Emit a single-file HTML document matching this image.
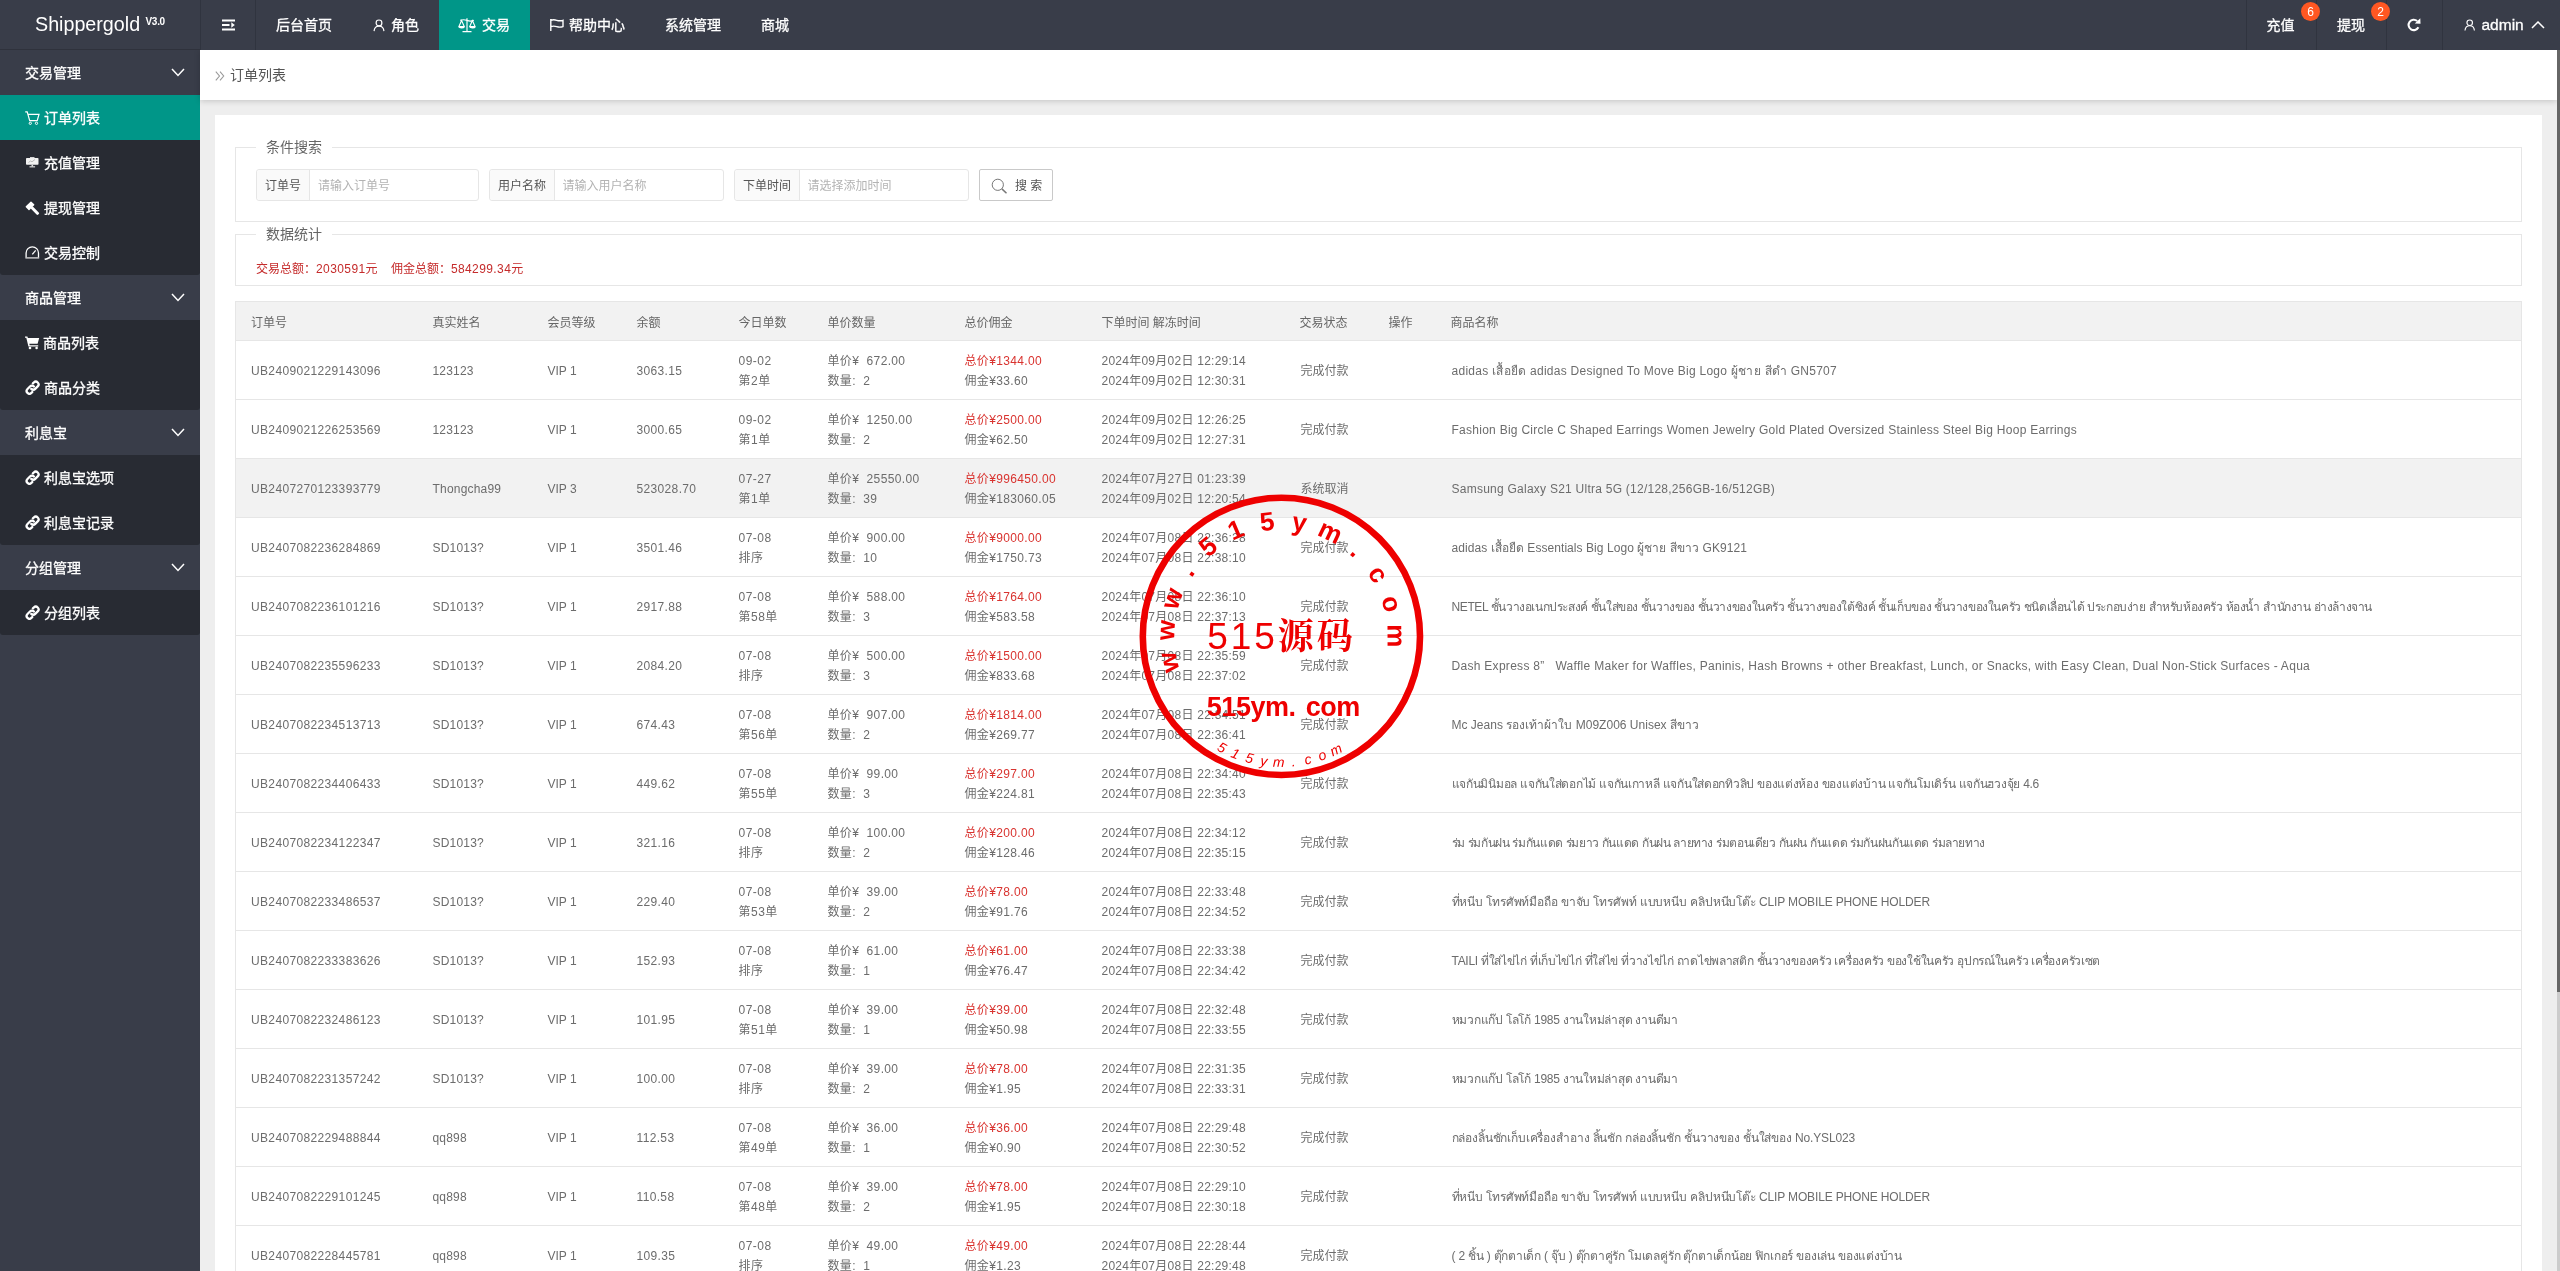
<!DOCTYPE html>
<html lang="zh-CN">
<head>
<meta charset="utf-8">
<title>订单列表</title>
<style>
*{box-sizing:border-box;margin:0;padding:0}
html,body{width:2560px;height:1271px;overflow:hidden;background:#eee}
body{font-family:"Liberation Sans","Noto Sans CJK SC",sans-serif;font-size:12px;color:#666;position:relative}
.abs{position:absolute}
/* header */
#hd{position:absolute;left:0;top:0;width:2560px;height:50px;background:#393d49;z-index:5}
#logo{position:absolute;left:0;top:0;width:200px;height:50px;color:#fff;font-size:19.7px;line-height:50px;border-bottom:1px solid #2f323c}
#logo .t{position:absolute;left:35px;top:-1px;letter-spacing:0}
#logo sup{position:absolute;left:145.500px;top:-3.500px;font-size:10px;font-weight:bold;letter-spacing:-.3px}
.nv{position:absolute;top:0;height:50px;line-height:50px;color:#fff;font-size:14px;white-space:nowrap}
.nv.act{background:#009688}
.vline{position:absolute;top:0;width:1px;height:50px;background:#30343f}
.nv svg{position:absolute}
.badge{position:absolute;z-index:3;width:19px;height:19px;border-radius:10px;background:#ff5722;color:#fff;font-size:12px;line-height:20.500px;text-align:center}
/* sidebar */
#sd{position:absolute;left:0;top:50px;width:200px;height:1221px;background:#393d49}
.mh{position:absolute;left:0;width:200px;height:45px;line-height:46.500px;color:#fff;font-size:14px;padding-left:25px}
.mh svg{position:absolute;left:171px;top:18px}
.sub{position:absolute;left:0;width:200px;background:#282b33;border-radius:0 0 3px 3px}
.mi{position:relative;height:45px;line-height:46.500px;color:#fff;font-size:14px;padding-left:44px;white-space:nowrap}
.mi.act{background:#009688}
.mi svg{position:absolute;left:25px;top:15px}
/* main */
#tb{position:absolute;left:200px;top:50px;width:2357px;height:50px;background:#fff;box-shadow:0 1px 6px rgba(0,0,0,.18);z-index:2}
#tb .t{position:absolute;left:30px;top:0;line-height:51px;font-size:14px;color:#555}
#card{position:absolute;left:215px;top:115px;width:2327px;height:1200px;background:#fff}
.fs{position:absolute;left:20px;width:2287px;border:1px solid #e6e6e6}
.lg{position:absolute;left:20px;top:-11px;height:20px;line-height:20px;padding:0 10px;background:#fff;font-size:14px;color:#666}
.ig{position:absolute;top:21px;height:32px;border:1px solid #e6e6e6;border-radius:3px;background:#fff}
.ig .lb{position:absolute;left:0;top:0;height:30px;line-height:32.500px;background:#fafafa;border-right:1px solid #e6e6e6;color:#555;text-align:center;border-radius:3px 0 0 3px}
.ig .ph{position:absolute;top:0;line-height:32.500px;color:#b3b3b3}
.btn{position:absolute;top:21px;left:743px;width:74px;height:32px;border:1px solid #c9c9c9;border-radius:2px;background:#fff;color:#555;line-height:32.500px}
.red{color:#d9332f}
/* table */
table{position:absolute;left:20px;top:186px;width:2287px;border-collapse:collapse;table-layout:fixed;border:1px solid #e6e6e6}
th{height:39px;background:#f2f2f2;text-align:left;font-weight:normal;color:#666;padding:0 15px;border-bottom:1px solid #e6e6e6;font-size:12px}
td{height:59px;padding:2px 15px 0;border-bottom:1px solid #e6e6e6;line-height:20px;white-space:nowrap;color:#6c6c6c;font-size:12px;overflow:hidden}
tr.hov td{background:#f2f2f2}
.c1,.c4,.c6,.c7{letter-spacing:.35px}.c2{letter-spacing:.2px}.c5{letter-spacing:.5px}.c8{letter-spacing:.25px}
#card,#hd,#sd,#tb{will-change:transform}
.mh,.mi,.nv{-webkit-text-stroke:.3px #fff}
td.c9,td.c11{padding-left:16px}
/* scrollbar */
#sbt{position:absolute;left:2557px;top:50px;width:3px;height:1221px;background:#ccc;z-index:6}
#sbh{position:absolute;left:2557px;top:50px;width:3px;height:942px;background:#666;z-index:7}
#stamp{position:absolute;left:1130.700px;top:485.700px;z-index:9}
</style>
</head>
<body>
<div id="hd">
  <div id="logo"><span class="t">Shippergold</span><sup>V3.0</sup></div>
  <div class="vline" style="left:200px"></div>
  <div class="nv" style="left:201px;width:54px">
    <svg style="left:21px;top:19px" width="13" height="12" viewBox="0 0 13 12"><path d="M0 1.500h13M0 6h7.500M0 10.500h13" stroke="#fff" stroke-width="2" fill="none"/><path d="M9.300 3.300l3.500 2.700-3.500 2.700z" fill="#fff"/></svg>
  </div>
  <div class="vline" style="left:255px"></div>
  <div class="nv" style="left:276px">后台首页</div>
  <div class="nv" style="left:352px;width:87px"><svg style="left:20.900px;top:19px" width="12" height="12.800" viewBox="0 0 14 15"><circle cx="7" cy="4.6" r="3.4" fill="none" stroke="#fff" stroke-width="1.4"/><path d="M1.2 14.2c.3-3.6 2.6-5.9 5.8-5.9s5.5 2.3 5.8 5.9" fill="none" stroke="#fff" stroke-width="1.4"/></svg><span style="position:absolute;left:39px">角色</span></div>
  <div class="nv act" style="left:439px;width:91px"><svg style="left:19px;top:17px" width="18" height="16" viewBox="0 0 18 16"><g fill="none" stroke="#fff" stroke-width="1.150"><path d="M9 1.2v13M4.5 14.6h9M2.2 3.4c2.2-.9 4.5-.9 6.8 0 2.300.9 4.600.9 6.800 0"/><path d="M3.600 3.600L.9 9.600h5.400zM.8 9.700c.5 1.600 4.900 1.600 5.500 0M14.400 3.600l-2.700 6h5.400zM11.700 9.700c.5 1.600 4.900 1.600 5.500 0"/></g></svg><span style="position:absolute;left:43px">交易</span></div>
  <div class="nv" style="left:530px;width:115px"><svg style="left:20px;top:19.200px" width="14" height="12" viewBox="0 0 14 12"><path d="M.8 0v12M.8 1.300c1.900-.7 3.800-.7 5.900 0 2.100.7 4.100.7 6.300 0v6.300c-2.200.7-4.200.7-6.300 0-2.100-.7-4-.7-5.900 0" fill="none" stroke="#fff" stroke-width="1.400"/></svg><span style="position:absolute;left:39px">帮助中心</span></div>
  <div class="nv" style="left:665px">系统管理</div>
  <div class="nv" style="left:761px">商城</div>

  <div class="vline" style="left:2246px"></div>
  <div class="nv" style="left:2266.500px">充值</div>
  <div class="badge" style="left:2301px;top:1.500px">6</div>
  <div class="vline" style="left:2316px"></div>
  <div class="nv" style="left:2337px">提现</div>
  <div class="badge" style="left:2371px;top:1.500px">2</div>
  <div class="vline" style="left:2386px"></div>
  <div class="nv" style="left:2387px;width:55px"><svg style="left:20px;top:18.300px" width="14" height="14" viewBox="0 0 14 14"><path d="M11.400 9.300A5.200 5.200 0 1 1 10.200 3" fill="none" stroke="#fff" stroke-width="2.100"/><path d="M7.800 5.500L13.500 5.800 13.300 .2z" fill="#fff"/></svg></div>
  <div class="vline" style="left:2442px"></div>
  <div class="nv" style="left:2443px;width:114px"><svg style="left:21px;top:18.700px" width="11.400" height="12.200" viewBox="0 0 14 15"><circle cx="7" cy="4.6" r="3.4" fill="none" stroke="#fff" stroke-width="1.400"/><path d="M1.200 14.200c.3-3.600 2.600-5.900 5.800-5.900s5.500 2.300 5.800 5.900" fill="none" stroke="#fff" stroke-width="1.400"/></svg><span style="position:absolute;left:38.500px;font-size:15.500px">admin</span><svg style="left:88px;top:21px" width="14" height="8" viewBox="0 0 14 8"><path d="M1 7l6-6 6 6" fill="none" stroke="#fff" stroke-width="1.500"/></svg></div>
</div>

<div id="sd">
  <div class="mh" style="top:0">交易管理<svg width="14" height="9" viewBox="0 0 14 9"><path d="M1 1l6 6.500L13 1" fill="none" stroke="#fff" stroke-width="1.500"/></svg></div>
  <div class="sub" style="top:45px;height:180px">
    <div class="mi act"><svg width="15" height="15" viewBox="0 0 15 15"><path d="M.2 1.900h2l2.500 8.700h7.500l1.800-6.300H3.300" fill="none" stroke="#fff" stroke-width="1.200"/><circle cx="5.300" cy="13.300" r="1.150" fill="none" stroke="#fff" stroke-width="1"/><circle cx="11.500" cy="13.300" r="1.150" fill="none" stroke="#fff" stroke-width="1"/></svg>订单列表</div>
    <div class="mi"><svg width="15" height="15" viewBox="0 0 15 15"><rect x="1" y="3" width="12.500" height="6.800" rx=".8" fill="#f2f2f2"/><path d="M3.500 7.500l2-1.500 1.500.8 3-2.300" stroke="#aaa" stroke-width=".8" fill="none"/><rect x="5" y="2.100" width="4.500" height="1.200" fill="#e8e8e8"/><rect x="6.500" y="9.800" width="1.600" height="1.700" fill="#ddd"/><rect x="4.500" y="11.300" width="5.600" height="1.100" fill="#e8e8e8"/></svg>充值管理</div>
    <div class="mi"><svg width="15" height="15" viewBox="0 0 15 15"><g fill="#fff" transform="translate(5 5.800) rotate(45)"><rect x="-2.600" y="-4" width="5.200" height="8" rx=".7"/><rect x="2" y="-1.500" width="10" height="3" rx="1.200"/></g></svg>提现管理</div>
    <div class="mi"><svg width="15" height="15" viewBox="0 0 15 15"><path d="M1.100 12.500V8a6.200 6.200 0 0 1 12.400 0v4.500" fill="none" stroke="#fff" stroke-width="1.300"/><path d="M7.300 9.300l3.400-4" stroke="#fff" stroke-width="1.300"/><path d="M.4 12.900h13.800" stroke="#ddd" stroke-width="1.300"/></svg>交易控制</div>
  </div>
  <div class="mh" style="top:225px">商品管理<svg width="14" height="9" viewBox="0 0 14 9"><path d="M1 1l6 6.500L13 1" fill="none" stroke="#fff" stroke-width="1.500"/></svg></div>
  <div class="sub" style="top:270px;height:90px">
    <div class="mi" style="padding-left:43px"><svg width="15" height="15" viewBox="0 0 15 15"><path d="M0 1.500h2.400l.5 1.500h11.300l-1.600 5.800H4.300l.4 1.500h8.500v1.200H3.400L1.300 2.700H0z" fill="#fff"/><circle cx="5" cy="13" r="1.300" fill="#fff"/><circle cx="11.600" cy="13" r="1.300" fill="#fff"/></svg>商品列表</div>
    <div class="mi"><svg width="15" height="15" viewBox="0 0 15 15"><g fill="none" stroke="#fff" stroke-width="2.300" stroke-linecap="round"><path d="M6.300 8.900a2.700 2.700 0 0 0 3.900 0l2.500-2.500a2.700 2.700 0 0 0-3.900-3.900L7.900 3.400"/><path d="M8.900 6.500a2.700 2.700 0 0 0-3.900 0L2.500 9a2.700 2.700 0 0 0 3.900 3.900l.9-.9"/></g></svg>商品分类</div>
  </div>
  <div class="mh" style="top:360px">利息宝<svg width="14" height="9" viewBox="0 0 14 9"><path d="M1 1l6 6.500L13 1" fill="none" stroke="#fff" stroke-width="1.500"/></svg></div>
  <div class="sub" style="top:405px;height:90px">
    <div class="mi"><svg width="15" height="15" viewBox="0 0 15 15"><g fill="none" stroke="#fff" stroke-width="2.300" stroke-linecap="round"><path d="M6.300 8.900a2.700 2.700 0 0 0 3.900 0l2.500-2.500a2.700 2.700 0 0 0-3.900-3.900L7.900 3.400"/><path d="M8.900 6.500a2.700 2.700 0 0 0-3.900 0L2.500 9a2.700 2.700 0 0 0 3.900 3.900l.9-.9"/></g></svg>利息宝选项</div>
    <div class="mi"><svg width="15" height="15" viewBox="0 0 15 15"><g fill="none" stroke="#fff" stroke-width="2.300" stroke-linecap="round"><path d="M6.300 8.900a2.700 2.700 0 0 0 3.900 0l2.500-2.500a2.700 2.700 0 0 0-3.900-3.900L7.900 3.400"/><path d="M8.900 6.500a2.700 2.700 0 0 0-3.900 0L2.500 9a2.700 2.700 0 0 0 3.900 3.900l.9-.9"/></g></svg>利息宝记录</div>
  </div>
  <div class="mh" style="top:495px">分组管理<svg width="14" height="9" viewBox="0 0 14 9"><path d="M1 1l6 6.500L13 1" fill="none" stroke="#fff" stroke-width="1.500"/></svg></div>
  <div class="sub" style="top:540px;height:45px">
    <div class="mi"><svg width="15" height="15" viewBox="0 0 15 15"><g fill="none" stroke="#fff" stroke-width="2.300" stroke-linecap="round"><path d="M6.300 8.900a2.700 2.700 0 0 0 3.900 0l2.500-2.500a2.700 2.700 0 0 0-3.900-3.900L7.900 3.400"/><path d="M8.900 6.500a2.700 2.700 0 0 0-3.900 0L2.500 9a2.700 2.700 0 0 0 3.900 3.900l.9-.9"/></g></svg>分组列表</div>
  </div>
</div>

<div id="tb"><svg class="abs" style="left:15px;top:20.500px" width="10" height="10" viewBox="0 0 10 10"><path d="M.8.600L4.500 5 .8 9.400M5 .6L8.700 5 5 9.400" fill="none" stroke="#999" stroke-width="1.100"/></svg><span class="t">订单列表</span></div>

<div id="card">
  <div class="fs" style="top:32px;height:75px">
    <div class="lg">条件搜索</div>
    <div class="ig" style="left:20px;width:223px"><div class="lb" style="width:53px">订单号</div><div class="ph" style="left:61px">请输入订单号</div></div>
    <div class="ig" style="left:253px;width:235px"><div class="lb" style="width:65px">用户名称</div><div class="ph" style="left:72.500px">请输入用户名称</div></div>
    <div class="ig" style="left:498px;width:235px"><div class="lb" style="width:65px">下单时间</div><div class="ph" style="left:72.500px">请选择添加时间</div></div>
    <div class="btn"><svg class="abs" style="left:11px;top:7.500px" width="17" height="17" viewBox="0 0 17 17"><circle cx="6.800" cy="6.800" r="5.600" fill="none" stroke="#777" stroke-width="1"/><path d="M10.900 10.900l4.600 4.400" stroke="#777" stroke-width="1.500"/></svg><span class="abs" style="left:35px;top:0">搜 索</span></div>
  </div>
  <div class="fs" style="top:119px;height:52px">
    <div class="lg">数据统计</div>
    <div class="abs" style="left:20px;top:24px;line-height:20px;color:#c52b2b;white-space:nowrap">交易总额：<span style="letter-spacing:.4px">2030591</span>元 &nbsp;&nbsp; 佣金总额：<span style="letter-spacing:.4px">584299.34</span>元</div>
  </div>
  <table>
    <colgroup><col style="width:182px"><col style="width:115px"><col style="width:89px"><col style="width:102px"><col style="width:89px"><col style="width:137px"><col style="width:137px"><col style="width:198px"><col style="width:89px"><col style="width:62px"><col></colgroup>
    <thead><tr><th>订单号</th><th>真实姓名</th><th>会员等级</th><th>余额</th><th>今日单数</th><th>单价数量</th><th>总价佣金</th><th>下单时间 解冻时间</th><th>交易状态</th><th>操作</th><th>商品名称</th></tr></thead>
    <tbody>
<tr><td class="c1">UB2409021229143096</td><td class="c2">123123</td><td class="c3">VIP 1</td><td class="c4">3063.15</td><td class="c5">09-02<br>第2单</td><td class="c6">单价¥&nbsp; 672.00<br>数量: &nbsp;2</td><td class="c7"><span class="red">总价¥1344.00</span><br>佣金¥33.60</td><td class="c8">2024年09月02日 12:29:14<br>2024年09月02日 12:30:31</td><td class="c9">完成付款</td><td class="c10"></td><td class="c11" style="letter-spacing:0.27px">adidas เสื้อยืด adidas Designed To Move Big Logo ผู้ชาย สีดำ GN5707</td></tr>
<tr><td class="c1">UB2409021226253569</td><td class="c2">123123</td><td class="c3">VIP 1</td><td class="c4">3000.65</td><td class="c5">09-02<br>第1单</td><td class="c6">单价¥&nbsp; 1250.00<br>数量: &nbsp;2</td><td class="c7"><span class="red">总价¥2500.00</span><br>佣金¥62.50</td><td class="c8">2024年09月02日 12:26:25<br>2024年09月02日 12:27:31</td><td class="c9">完成付款</td><td class="c10"></td><td class="c11" style="letter-spacing:0.265px">Fashion Big Circle C Shaped Earrings Women Jewelry Gold Plated Oversized Stainless Steel Big Hoop Earrings</td></tr>
<tr class="hov"><td class="c1">UB2407270123393779</td><td class="c2">Thongcha99</td><td class="c3">VIP 3</td><td class="c4">523028.70</td><td class="c5">07-27<br>第1单</td><td class="c6">单价¥&nbsp; 25550.00<br>数量: &nbsp;39</td><td class="c7"><span class="red">总价¥996450.00</span><br>佣金¥183060.05</td><td class="c8">2024年07月27日 01:23:39<br>2024年09月02日 12:20:54</td><td class="c9">系统取消</td><td class="c10"></td><td class="c11" style="letter-spacing:0.248px">Samsung Galaxy S21 Ultra 5G (12/128,256GB-16/512GB)</td></tr>
<tr><td class="c1">UB2407082236284869</td><td class="c2">SD1013?</td><td class="c3">VIP 1</td><td class="c4">3501.46</td><td class="c5">07-08<br>排序</td><td class="c6">单价¥&nbsp; 900.00<br>数量: &nbsp;10</td><td class="c7"><span class="red">总价¥9000.00</span><br>佣金¥1750.73</td><td class="c8">2024年07月08日 22:36:28<br>2024年07月08日 22:38:10</td><td class="c9">完成付款</td><td class="c10"></td><td class="c11" style="letter-spacing:0.062px">adidas เสื้อยืด Essentials Big Logo ผู้ชาย สีขาว GK9121</td></tr>
<tr><td class="c1">UB2407082236101216</td><td class="c2">SD1013?</td><td class="c3">VIP 1</td><td class="c4">2917.88</td><td class="c5">07-08<br>第58单</td><td class="c6">单价¥&nbsp; 588.00<br>数量: &nbsp;3</td><td class="c7"><span class="red">总价¥1764.00</span><br>佣金¥583.58</td><td class="c8">2024年07月08日 22:36:10<br>2024年07月08日 22:37:13</td><td class="c9">完成付款</td><td class="c10"></td><td class="c11" style="letter-spacing:-0.395px">NETEL ชั้นวางอเนกประสงค์ ชั้นใส่ของ ชั้นวางของ ชั้นวางของในครัว ชั้นวางของใต้ซิงค์ ชั้นเก็บของ ชั้นวางของในครัว ชนิดเลื่อนได้ ประกอบง่าย สำหรับห้องครัว ห้องน้ำ สำนักงาน อ่างล้างจาน</td></tr>
<tr><td class="c1">UB2407082235596233</td><td class="c2">SD1013?</td><td class="c3">VIP 1</td><td class="c4">2084.20</td><td class="c5">07-08<br>排序</td><td class="c6">单价¥&nbsp; 500.00<br>数量: &nbsp;3</td><td class="c7"><span class="red">总价¥1500.00</span><br>佣金¥833.68</td><td class="c8">2024年07月08日 22:35:59<br>2024年07月08日 22:37:02</td><td class="c9">完成付款</td><td class="c10"></td><td class="c11" style="letter-spacing:0.29px">Dash Express 8”&nbsp;&nbsp; Waffle Maker for Waffles, Paninis, Hash Browns + other Breakfast, Lunch, or Snacks, with Easy Clean, Dual Non-Stick Surfaces - Aqua</td></tr>
<tr><td class="c1">UB2407082234513713</td><td class="c2">SD1013?</td><td class="c3">VIP 1</td><td class="c4">674.43</td><td class="c5">07-08<br>第56单</td><td class="c6">单价¥&nbsp; 907.00<br>数量: &nbsp;2</td><td class="c7"><span class="red">总价¥1814.00</span><br>佣金¥269.77</td><td class="c8">2024年07月08日 22:34:51<br>2024年07月08日 22:36:41</td><td class="c9">完成付款</td><td class="c10"></td><td class="c11" style="letter-spacing:0.011px">Mc Jeans รองเท้าผ้าใบ M09Z006 Unisex สีขาว</td></tr>
<tr><td class="c1">UB2407082234406433</td><td class="c2">SD1013?</td><td class="c3">VIP 1</td><td class="c4">449.62</td><td class="c5">07-08<br>第55单</td><td class="c6">单价¥&nbsp; 99.00<br>数量: &nbsp;3</td><td class="c7"><span class="red">总价¥297.00</span><br>佣金¥224.81</td><td class="c8">2024年07月08日 22:34:40<br>2024年07月08日 22:35:43</td><td class="c9">完成付款</td><td class="c10"></td><td class="c11" style="letter-spacing:-0.276px">แจกันมินิมอล แจกันใส่ดอกไม้ แจกันเกาหลี แจกันใส่ดอกทิวลิป ของแต่งห้อง ของแต่งบ้าน แจกันโมเดิร์น แจกันฮวงจุ้ย 4.6</td></tr>
<tr><td class="c1">UB2407082234122347</td><td class="c2">SD1013?</td><td class="c3">VIP 1</td><td class="c4">321.16</td><td class="c5">07-08<br>排序</td><td class="c6">单价¥&nbsp; 100.00<br>数量: &nbsp;2</td><td class="c7"><span class="red">总价¥200.00</span><br>佣金¥128.46</td><td class="c8">2024年07月08日 22:34:12<br>2024年07月08日 22:35:15</td><td class="c9">完成付款</td><td class="c10"></td><td class="c11" style="letter-spacing:-0.376px">ร่ม ร่มกันฝน ร่มกันแดด ร่มยาว กันแดด กันฝน ลายทาง ร่มตอนเดียว กันฝน กันแดด ร่มกันฝนกันแดด ร่มลายทาง</td></tr>
<tr><td class="c1">UB2407082233486537</td><td class="c2">SD1013?</td><td class="c3">VIP 1</td><td class="c4">229.40</td><td class="c5">07-08<br>第53单</td><td class="c6">单价¥&nbsp; 39.00<br>数量: &nbsp;2</td><td class="c7"><span class="red">总价¥78.00</span><br>佣金¥91.76</td><td class="c8">2024年07月08日 22:33:48<br>2024年07月08日 22:34:52</td><td class="c9">完成付款</td><td class="c10"></td><td class="c11" style="letter-spacing:-0.145px">ที่หนีบ โทรศัพท์มือถือ ขาจับ โทรศัพท์ แบบหนีบ คลิปหนีบโต๊ะ CLIP MOBILE PHONE HOLDER</td></tr>
<tr><td class="c1">UB2407082233383626</td><td class="c2">SD1013?</td><td class="c3">VIP 1</td><td class="c4">152.93</td><td class="c5">07-08<br>排序</td><td class="c6">单价¥&nbsp; 61.00<br>数量: &nbsp;1</td><td class="c7"><span class="red">总价¥61.00</span><br>佣金¥76.47</td><td class="c8">2024年07月08日 22:33:38<br>2024年07月08日 22:34:42</td><td class="c9">完成付款</td><td class="c10"></td><td class="c11" style="letter-spacing:-0.294px">TAILI ที่ใส่ไข่ไก่ ที่เก็บไข่ไก่ ที่ใส่ไข่ ที่วางไข่ไก่ ถาดไข่พลาสติก ชั้นวางของครัว เครื่องครัว ของใช้ในครัว อุปกรณ์ในครัว เครื่องครัวเซต</td></tr>
<tr><td class="c1">UB2407082232486123</td><td class="c2">SD1013?</td><td class="c3">VIP 1</td><td class="c4">101.95</td><td class="c5">07-08<br>第51单</td><td class="c6">单价¥&nbsp; 39.00<br>数量: &nbsp;1</td><td class="c7"><span class="red">总价¥39.00</span><br>佣金¥50.98</td><td class="c8">2024年07月08日 22:32:48<br>2024年07月08日 22:33:55</td><td class="c9">完成付款</td><td class="c10"></td><td class="c11" style="letter-spacing:-0.244px">หมวกแก๊ป โลโก้ 1985 งานใหม่ล่าสุด งานดีมา</td></tr>
<tr><td class="c1">UB2407082231357242</td><td class="c2">SD1013?</td><td class="c3">VIP 1</td><td class="c4">100.00</td><td class="c5">07-08<br>排序</td><td class="c6">单价¥&nbsp; 39.00<br>数量: &nbsp;2</td><td class="c7"><span class="red">总价¥78.00</span><br>佣金¥1.95</td><td class="c8">2024年07月08日 22:31:35<br>2024年07月08日 22:33:31</td><td class="c9">完成付款</td><td class="c10"></td><td class="c11" style="letter-spacing:-0.244px">หมวกแก๊ป โลโก้ 1985 งานใหม่ล่าสุด งานดีมา</td></tr>
<tr><td class="c1">UB2407082229488844</td><td class="c2">qq898</td><td class="c3">VIP 1</td><td class="c4">112.53</td><td class="c5">07-08<br>第49单</td><td class="c6">单价¥&nbsp; 36.00<br>数量: &nbsp;1</td><td class="c7"><span class="red">总价¥36.00</span><br>佣金¥0.90</td><td class="c8">2024年07月08日 22:29:48<br>2024年07月08日 22:30:52</td><td class="c9">完成付款</td><td class="c10"></td><td class="c11" style="letter-spacing:-0.157px">กล่องลิ้นชักเก็บเครื่องสำอาง ลิ้นชัก กล่องลิ้นชัก ชั้นวางของ ชั้นใส่ของ No.YSL023</td></tr>
<tr><td class="c1">UB2407082229101245</td><td class="c2">qq898</td><td class="c3">VIP 1</td><td class="c4">110.58</td><td class="c5">07-08<br>第48单</td><td class="c6">单价¥&nbsp; 39.00<br>数量: &nbsp;2</td><td class="c7"><span class="red">总价¥78.00</span><br>佣金¥1.95</td><td class="c8">2024年07月08日 22:29:10<br>2024年07月08日 22:30:18</td><td class="c9">完成付款</td><td class="c10"></td><td class="c11" style="letter-spacing:-0.145px">ที่หนีบ โทรศัพท์มือถือ ขาจับ โทรศัพท์ แบบหนีบ คลิปหนีบโต๊ะ CLIP MOBILE PHONE HOLDER</td></tr>
<tr><td class="c1">UB2407082228445781</td><td class="c2">qq898</td><td class="c3">VIP 1</td><td class="c4">109.35</td><td class="c5">07-08<br>排序</td><td class="c6">单价¥&nbsp; 49.00<br>数量: &nbsp;1</td><td class="c7"><span class="red">总价¥49.00</span><br>佣金¥1.23</td><td class="c8">2024年07月08日 22:28:44<br>2024年07月08日 22:29:48</td><td class="c9">完成付款</td><td class="c10"></td><td class="c11" style="letter-spacing:-0.22px">( 2 ชิ้น ) ตุ๊กตาเด็ก ( จุ๊บ ) ตุ๊กตาคู่รัก โมเดลคู่รัก ตุ๊กตาเด็กน้อย ฟิกเกอร์ ของเล่น ของแต่งบ้าน</td></tr>
    </tbody>
  </table>
</div>

<div id="sbt"></div><div id="sbh"></div>

<svg id="stamp" width="300" height="300" viewBox="0 0 300 300">
  <defs>
    <path id="arcTop" d="M 62.760 211.090 A 106.500 106.500 0 1 1 237.240 211.090"/>
    <path id="arcBot" d="M 57.370 242.630 A 131 131 0 0 0 242.630 242.630"/>
  </defs>
  <circle cx="150.400" cy="150.400" r="138.600" fill="none" stroke="#ee0000" stroke-width="6.600"/>
  <text font-family="'Liberation Sans',sans-serif" font-size="26" font-weight="bold" fill="#ee0000" dx="0 9.700 9.700 16.200 19.080 15.470 15.470 15.470 11.140 14.760 19.080 14.760 10.430"><textPath href="#arcTop" startOffset="30.400">www.515ym.com</textPath></text>
  <text x="150.500" y="162.500" text-anchor="middle" font-family="'Liberation Sans','Noto Serif CJK SC',serif" font-size="37" fill="#ee0000" letter-spacing="3">515<tspan font-family="'Noto Serif CJK SC',serif" font-weight="bold" font-size="36" letter-spacing="3">源码</tspan></text>
  <text x="152.300" y="229.600" text-anchor="middle" font-family="'Liberation Sans',sans-serif" font-size="27" font-weight="bold" fill="#ee0000" letter-spacing="-.45" word-spacing="3">515ym. com</text>
  <text font-family="'Liberation Sans',sans-serif" font-size="14" font-style="italic" fill="#ee0000" dx="0 7.530 7.530 7.930 5.990 7.540 9.870 7.930 5.600"><textPath href="#arcBot" startOffset="35.200">515ym.com</textPath></text>
</svg>
</body>
</html>
